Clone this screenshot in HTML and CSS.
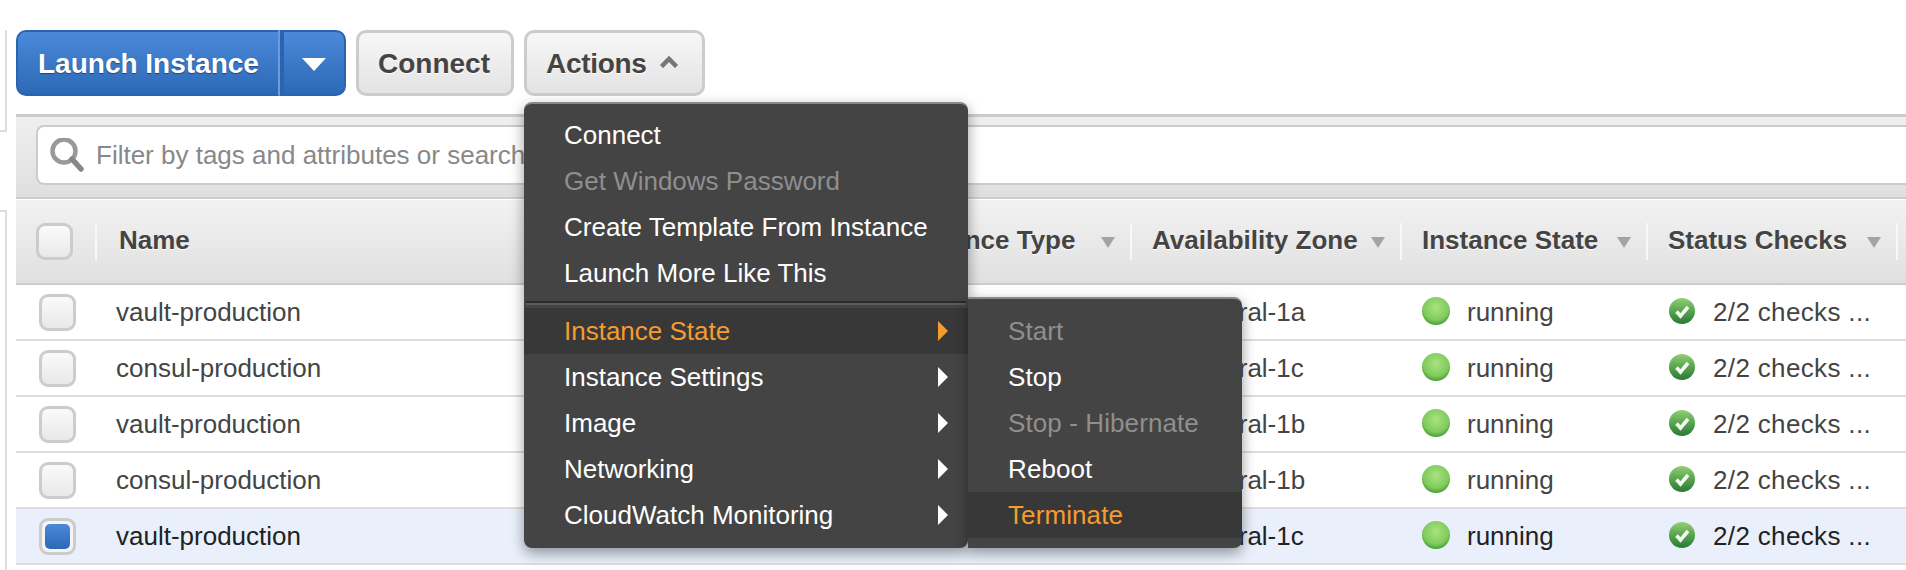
FILE: index.html
```html
<!DOCTYPE html>
<html lang="en">
<head>
    <meta charset="UTF-8">
    <title>Instances</title>
    <link rel="stylesheet" href="styles.css">
</head>
<body>
    <svg class="defs" width="0" height="0">
        <defs>
            <radialGradient id="dot-fill" cx="50%" cy="38%" r="62%">
                <stop offset="0" stop-color="#a8e47e"/>
                <stop offset="0.72" stop-color="#7fcb5c"/>
                <stop offset="1" stop-color="#4a9a3a"/>
            </radialGradient>
            <linearGradient id="check-fill" x1="0" y1="0" x2="0" y2="1">
                <stop offset="0" stop-color="#93cf74"/>
                <stop offset="0.55" stop-color="#549f4e"/>
                <stop offset="1" stop-color="#2a7a35"/>
            </linearGradient>
            <symbol id="dot" viewBox="0 0 28 28">
                <circle cx="14" cy="14" r="14" fill="url(#dot-fill)"/>
            </symbol>
            <symbol id="check" viewBox="0 0 26 26">
                <circle cx="13" cy="13" r="13" fill="url(#check-fill)"/>
                <path d="M7.5 13.5l4 4.5 7.5-9" fill="none" stroke="#f4f9f0" stroke-width="3.6"/>
            </symbol>
        </defs>
    </svg>

    <div class="page">
        <div class="rail">
            <div class="rail-top"></div>
            <div class="rail-bottom"></div>
        </div>

        <div class="main">
            <div class="toolbar">
                <div class="btn-group">
                    <span class="btn-primary btn-label">Launch Instance</span>
                    <span class="btn-primary btn-caret"><span class="caret-down"></span></span>
                </div>
                <span class="btn">Connect</span>
                <span class="btn btn-actions">Actions
                    <svg class="chevron" width="20" height="13" viewBox="0 0 20 13"><path d="M2.5 11.5L10 4l7.5 7.5" fill="none" stroke="#777" stroke-width="4.5"/></svg>
                </span>
            </div>

            <div class="filter-band">
                <div class="filter-input">
                    <svg class="search-icon" width="35" height="34" viewBox="0 0 35 34">
                        <circle cx="14" cy="13" r="11.5" fill="none" stroke="#999" stroke-width="4.5"/>
                        <path d="M22 21l9 10" fill="none" stroke="#888" stroke-width="5.5" stroke-linecap="round"/>
                    </svg>
                    <span>Filter by tags and attributes or search by keyword</span>
                </div>
            </div>

            <div class="table">
                <div class="row row-head">
                    <div class="cell-check"><span class="checkbox"></span></div>
                    <div class="th th-name">Name</div>
                    <div class="th">Instance Type<i class="sort"></i></div>
                    <div class="th">Availability Zone<i class="sort"></i></div>
                    <div class="th">Instance State<i class="sort"></i></div>
                    <div class="th">Status Checks<i class="sort"></i></div>
                    <div class="th"></div>
                </div>

                <div class="row">
                    <div class="cell-check"><span class="checkbox"></span></div>
                    <div class="td td-name">vault-production</div>
                    <div class="td"></div>
                    <div class="td td-zone">eu-central-1a</div>
                    <div class="td td-state"><svg width="28" height="28"><use href="#dot"/></svg>running</div>
                    <div class="td td-status"><svg width="26" height="26"><use href="#check"/></svg>2/2 checks ...</div>
                </div>
                <div class="row">
                    <div class="cell-check"><span class="checkbox"></span></div>
                    <div class="td td-name">consul-production</div>
                    <div class="td"></div>
                    <div class="td td-zone">eu-central-1c</div>
                    <div class="td td-state"><svg width="28" height="28"><use href="#dot"/></svg>running</div>
                    <div class="td td-status"><svg width="26" height="26"><use href="#check"/></svg>2/2 checks ...</div>
                </div>
                <div class="row">
                    <div class="cell-check"><span class="checkbox"></span></div>
                    <div class="td td-name">vault-production</div>
                    <div class="td"></div>
                    <div class="td td-zone">eu-central-1b</div>
                    <div class="td td-state"><svg width="28" height="28"><use href="#dot"/></svg>running</div>
                    <div class="td td-status"><svg width="26" height="26"><use href="#check"/></svg>2/2 checks ...</div>
                </div>
                <div class="row">
                    <div class="cell-check"><span class="checkbox"></span></div>
                    <div class="td td-name">consul-production</div>
                    <div class="td"></div>
                    <div class="td td-zone">eu-central-1b</div>
                    <div class="td td-state"><svg width="28" height="28"><use href="#dot"/></svg>running</div>
                    <div class="td td-status"><svg width="26" height="26"><use href="#check"/></svg>2/2 checks ...</div>
                </div>
                <div class="row row-selected">
                    <div class="cell-check"><span class="checkbox checked"></span></div>
                    <div class="td td-name">vault-production</div>
                    <div class="td"></div>
                    <div class="td td-zone">eu-central-1c</div>
                    <div class="td td-state"><svg width="28" height="28"><use href="#dot"/></svg>running</div>
                    <div class="td td-status"><svg width="26" height="26"><use href="#check"/></svg>2/2 checks ...</div>
                </div>
            </div>
        </div>
    </div>

    <div class="menu menu-main">
        <div class="menu-item">Connect</div>
        <div class="menu-item disabled">Get Windows Password</div>
        <div class="menu-item">Create Template From Instance</div>
        <div class="menu-item">Launch More Like This</div>
        <div class="menu-sep"></div>
        <div class="menu-item sub active">Instance State</div>
        <div class="menu-item sub">Instance Settings</div>
        <div class="menu-item sub">Image</div>
        <div class="menu-item sub">Networking</div>
        <div class="menu-item sub">CloudWatch Monitoring</div>
    </div>

    <div class="menu menu-sub">
        <div class="menu-item disabled">Start</div>
        <div class="menu-item">Stop</div>
        <div class="menu-item disabled">Stop - Hibernate</div>
        <div class="menu-item">Reboot</div>
        <div class="menu-item active">Terminate</div>
    </div>
</body>
</html>
```

FILE: styles.css
```css
html, body {
    margin: 0;
    padding: 0;
    height: 570px;
    overflow: hidden;
    background-color: #fff;
    font-family: "Liberation Sans", Arial, sans-serif;
    font-size: 26px;
    color: #444;
}

.defs {
    position: absolute;
}

.page {
    display: flex;
}

/* left rail, just the edges of the collapsed side panels */
.rail {
    width: 16px;
    flex: none;
}

.rail-top {
    width: 5px;
    height: 100px;
    margin-top: 30px;
    border-right: 2px solid #ddd;
    border-bottom: 2px solid #ddd;
}

.rail-bottom {
    width: 5px;
    height: 358px;
    margin-top: 78px;
    border-right: 2px solid #ddd;
    border-top: 2px solid #ddd;
}

.main {
    flex: 1;
    min-width: 0;
}

.toolbar {
    display: flex;
    gap: 10px;
    padding-top: 30px;
    height: 66px;
}

.btn-group {
    display: flex;
    width: 330px;
}

.btn-primary {
    display: flex;
    align-items: center;
    box-sizing: border-box;
    height: 66px;
    padding-top: 2px;
    background: linear-gradient(#4b8ad9, #2c68b6);
    border: 2px solid #2a63ae;
    color: #fff;
    font-size: 28px;
    font-weight: bold;
    text-shadow: 0 1px 1px rgba(0, 0, 0, 0.4);
}

.btn-label {
    width: 264px;
    padding-left: 20px;
    border-radius: 10px 0 0 10px;
    border-right: 2px solid #6a9ddf;
}

.btn-caret {
    flex: 1;
    justify-content: center;
    border-left: 4px solid #2a63ae;
    border-radius: 0 10px 10px 0;
}

.caret-down {
    width: 0;
    height: 0;
    border-left: 12px solid transparent;
    border-right: 12px solid transparent;
    border-top: 13px solid #fff;
}

.btn {
    display: flex;
    align-items: center;
    box-sizing: border-box;
    height: 66px;
    padding: 2px 21px 0 19px;
    background: linear-gradient(#f7f7f7, #e3e3e3);
    border: 3px solid #ccc;
    border-radius: 10px;
    font-size: 28px;
    font-weight: bold;
    color: #444;
    text-shadow: 0 1px 0 #fff;
}

.btn-actions {
    gap: 12px;
    padding-right: 23px;
    letter-spacing: -0.3px;
}

.chevron {
    margin-top: -6px;
}

.filter-band {
    box-sizing: border-box;
    height: 85px;
    margin-top: 18px;
    padding: 8px 0 12px 20px;
    background-color: #ececec;
    background-image: linear-gradient(#efefef, #dfdfdf);
    border-top: 3px solid #ccc;
    border-bottom: 2px solid #ccc;
}

.filter-input {
    display: flex;
    align-items: center;
    gap: 11px;
    box-sizing: border-box;
    height: 60px;
    padding-left: 12px;
    background-color: #fff;
    border: 2px solid #ccc;
    border-right: none;
    border-radius: 8px 0 0 8px;
    color: #888;
    white-space: nowrap;
}

.table {
    margin-top: 1px;
}

.row {
    display: grid;
    grid-template-columns: 79px 787px 248px 270px 246px 250px 1fr;
    align-items: center;
    height: 56px;
    box-sizing: border-box;
    border-bottom: 2px solid #ddd;
    white-space: nowrap;
}

.row-head {
    height: 85px;
    background: linear-gradient(#f2f2f2, #e0e0e0);
    border-bottom: 2px solid #ccc;
}

.row-selected {
    background-color: #e9f0fb;
    color: #222;
}

.cell-check {
    display: flex;
    padding-left: 23px;
}

.row-head .cell-check {
    padding-left: 20px;
}

.checkbox {
    box-sizing: border-box;
    width: 37px;
    height: 37px;
    background: linear-gradient(#fafafa, #e9e9e9);
    border: 3px solid #ccc;
    border-radius: 9px;
}

.checkbox.checked {
    padding: 3px;
    background: #f4f4f4;
}

.checkbox.checked::before {
    content: "";
    display: block;
    height: 100%;
    border-radius: 5px;
    background: linear-gradient(#4b8ad9, #2c68b6);
}

.th {
    display: flex;
    align-items: center;
    justify-content: space-between;
    box-sizing: border-box;
    height: 37px;
    padding: 0 15px 2px 20px;
    border-left: 2px solid #f8f8f8;
    font-weight: bold;
    text-shadow: 0 1px 0 #fff;
}

.th-name {
    padding-left: 22px;
}

.sort {
    width: 0;
    height: 0;
    border-left: 7px solid transparent;
    border-right: 7px solid transparent;
    border-top: 11px solid #a3a3a3;
    margin-top: 3px;
}

.td {
    display: flex;
    align-items: center;
}

.td svg {
    margin-top: -2px;
}

.td-name {
    padding-left: 21px;
}

.td-zone {
    padding-left: 22px;
}

.td-state {
    gap: 17px;
    padding-left: 22px;
}

.td-status {
    gap: 18px;
    padding-left: 23px;
    letter-spacing: 0.35px;
}

/* dropdowns sit on top of the table */
.menu {
    position: absolute;
    box-sizing: border-box;
    background-color: #444;
    color: #fff;
    border-top: 2px solid #888;
    border-radius: 8px;
    box-shadow: 0 5px 14px rgba(0, 0, 0, 0.4);
    white-space: nowrap;
}

.menu-main {
    left: 524px;
    top: 102px;
    width: 444px;
    height: 446px;
    padding-top: 8px;
}

.menu-sub {
    left: 968px;
    top: 297px;
    width: 274px;
    height: 251px;
    padding-top: 9px;
    border-radius: 0 8px 8px 0;
}

.menu-item {
    position: relative;
    height: 46px;
    line-height: 46px;
    padding-left: 40px;
}

.menu-sub .menu-item {
    letter-spacing: 0.1px;
}

.menu-item.disabled {
    color: #8f8f8f;
}

.menu-item.active {
    background-color: #383838;
    color: #f59c2f;
}

.menu-item.sub::after {
    content: "";
    position: absolute;
    left: 414px;
    top: 13px;
    border-top: 10px solid transparent;
    border-bottom: 10px solid transparent;
    border-left: 10px solid #fff;
}

.menu-item.sub.active::after {
    border-left-color: #f59c2f;
}

.menu-sep {
    height: 2px;
    margin: 5px 2px 3px;
    background-color: #2a2a2a;
    border-bottom: 2px solid #5a5a5a;
}
```
